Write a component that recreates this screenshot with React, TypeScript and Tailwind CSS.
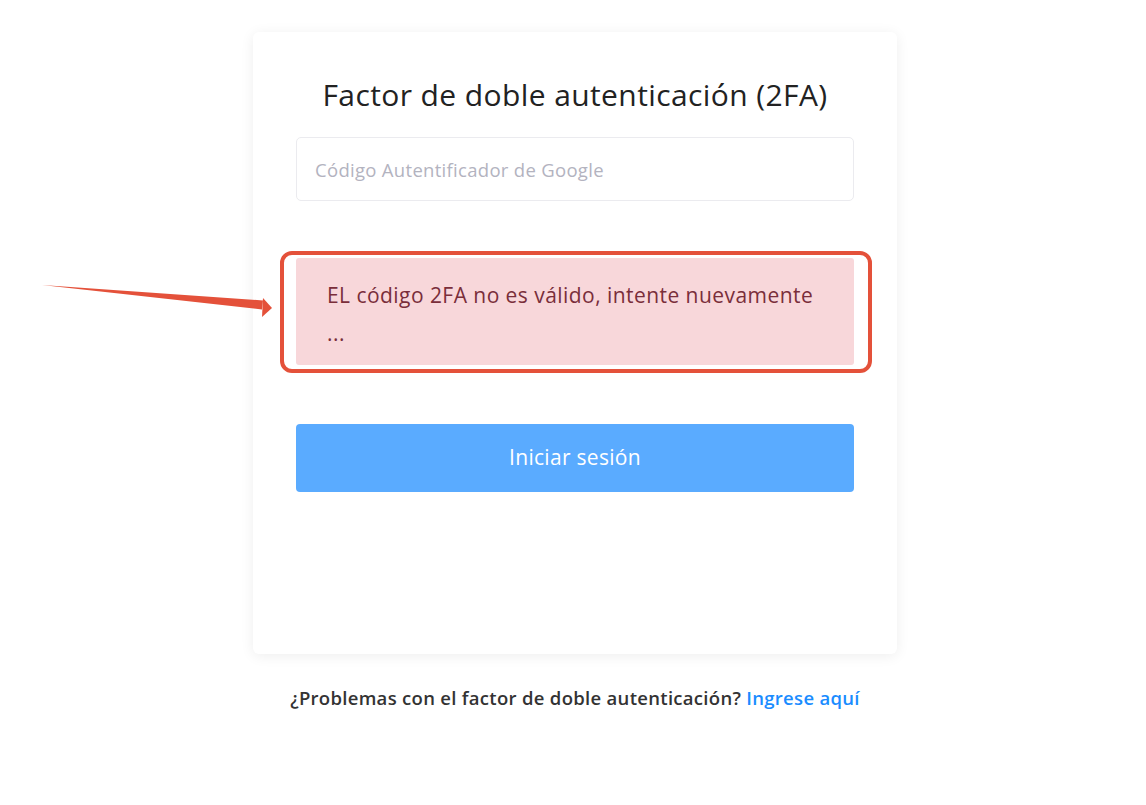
import React, { useState } from 'react';

const FONT = { fontFamily: '"Open Sans", "Noto Sans", "Liberation Sans", sans-serif' };

const Arrow = () => (
  <svg
    className="absolute left-0 top-0 pointer-events-none"
    width="300"
    height="340"
    viewBox="0 0 300 340"
  >
    <polygon points="42,285 263,300.5 262,309.5" fill="#e4513a" />
    <polygon points="263,298 272,308 262,317" fill="#e4513a" />
  </svg>
);

export default function App() {
  const [code, setCode] = useState('');

  return (
    <div className="relative min-h-[805px] w-full bg-white" style={FONT}>
      <Arrow />
      <div className="flex flex-col items-center pt-[32px] pl-[4px]">
        <div className="w-[644px] h-[622px] bg-white rounded-md shadow-[0_2px_14px_rgba(0,0,0,0.07)] px-[43px] pt-[44px]">
          <h1 className="text-center text-[30px] leading-[38px] tracking-[0.4px] font-medium text-[#222]">
            Factor de doble autenticación (2FA)
          </h1>

          <input
            type="text"
            value={code}
            onChange={(e) => setCode(e.target.value)}
            placeholder="Código Autentificador de Google"
            className="mt-[23px] w-full h-[64px] px-[18px] border border-[#ebebef] rounded-[5px] text-[18.5px] tracking-[0.3px] text-[#333] placeholder:text-[#b3b3bf] outline-none"
          />

          <div className="relative mt-[57px] h-[107px] bg-[#f8d7da] rounded-[3px] pl-[31px] pr-[20px] pt-[18px] text-[21px] tracking-[0.45px] leading-[38px] text-[#7a2e3a]">
            <div className="absolute -left-[16px] -right-[18px] -top-[7px] -bottom-[8px] border-[4px] border-[#e4513a] rounded-[12px] pointer-events-none" />
            EL código 2FA no es válido, intente nuevamente
            <br />
            ...
          </div>

          <button className="mt-[59px] w-full h-[68px] rounded-[4px] bg-[#5aabff] text-white text-[21px] tracking-[0.3px]">
            Iniciar sesión
          </button>
        </div>

        <p className="mt-[32px] text-[18.5px] leading-[24px] tracking-[0.3px] font-semibold text-[#333]">
          ¿Problemas con el factor de doble autenticación?{' '}
          <a href="#" className="text-[#1a8cff]">
            Ingrese aquí
          </a>
        </p>
      </div>
    </div>
  );
}
